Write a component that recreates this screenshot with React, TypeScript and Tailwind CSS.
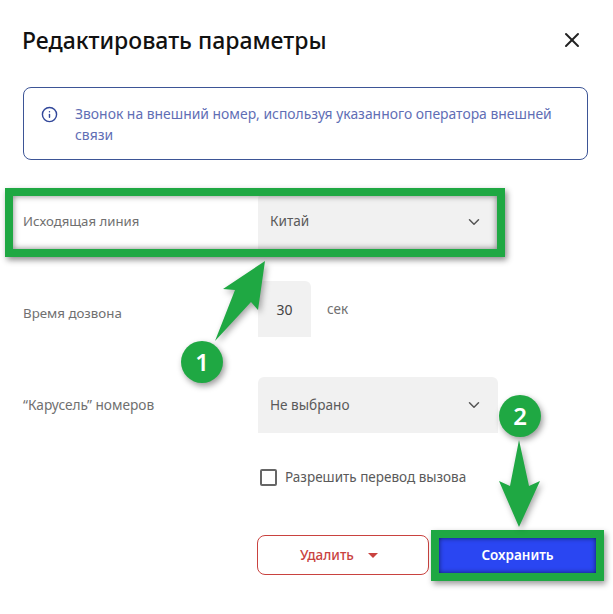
import React from 'react';
import { ChevronDown, Info, X } from 'lucide-react';

const font = { fontFamily: '"Noto Sans", sans-serif' };

function Select({ value }: { value: string }) {
    return (
        <div className="flex h-full items-center justify-between rounded-t-md bg-[#f1f1f1] pl-3 pr-[15px] text-[13.6px] text-[#5a5a5a]">
            <span>{value}</span>
            <ChevronDown className="h-[18px] w-[18px] text-[#555]" strokeWidth={2} />
        </div>
    );
}

function Badge({ n, className }: { n: number; className: string }) {
    return (
        <div className={`absolute z-20 flex h-[42px] w-[42px] items-center justify-center rounded-full bg-[#1fa843] text-[24px] font-semibold text-white shadow-[2px_3px_6px_rgba(0,0,0,0.4)] ${className}`}>
            {n}
        </div>
    );
}

export default function App() {
    return (
        <div className="relative h-[614px] w-[613px] overflow-hidden bg-white pl-[23px] pr-[25px] pt-6" style={font}>
            <div className="flex h-8 items-center justify-between">
                <h1 className="-ml-px text-[23px] font-medium leading-8 text-[#111]">Редактировать параметры</h1>
                <X className="mr-1 h-6 w-6 text-[#222]" strokeWidth={2} />
            </div>

            <div className="mt-[31px] flex h-[73px] gap-[17px] rounded-lg border border-[#3d5596] py-[15px] pl-[17px] pr-6">
                <Info className="mt-[3px] h-[17px] w-[17px] shrink-0 text-[#31479a]" strokeWidth={2} />
                <p className="text-[13.9px] leading-[21px] text-[#5f6eb5]">
                    Звонок на внешний номер, используя указанного оператора внешней связи
                </p>
            </div>

            <div className="relative mt-[33px] grid h-[57px] w-[475px] grid-cols-[235px_240px] items-center">
                <span className="text-[13.2px] text-[#707070]">Исходящая линия</span>
                <Select value="Китай" />
                <div className="absolute -bottom-[7px] -left-[18px] -right-[7px] -top-[5px] border-8 border-[#1fa843] shadow-[2px_3px_6px_rgba(0,0,0,0.45),inset_0_0_6px_rgba(0,0,0,0.5)]" />
            </div>

            <div className="mt-[31px] grid h-[56px] w-[475px] grid-cols-[235px_240px]">
                <span className="self-center pt-[9px] text-[13.3px] text-[#707070]">Время дозвона</span>
                <div className="flex h-full items-center gap-4">
                    <div className="flex h-full w-[53px] items-center justify-center rounded-t-md bg-[#f1f1f1] text-[14px] text-[#444]">30</div>
                    <span className="text-[13.5px] text-[#707070]">сек</span>
                </div>
            </div>

            <div className="mt-[40px] grid h-[56px] w-[475px] grid-cols-[235px_240px] items-center">
                <span className="text-[13.7px] text-[#707070]">“Карусель” номеров</span>
                <Select value="Не выбрано" />
            </div>

            <div className="ml-[237px] mt-[36px] flex h-4 items-center gap-2">
                <div className="h-[17px] w-[17px] rounded-[2px] border-2 border-[#666]" />
                <span className="text-[13.5px] text-[#5a5a5a]">Разрешить перевод вызова</span>
            </div>

            <div className="ml-[234px] mt-[50px] flex items-center gap-[10px]">
                <button className="flex h-10 w-[172px] shrink-0 items-center justify-center gap-[14px] rounded-lg border border-[#c9423f] pr-[8px] text-[13.5px] font-medium text-[#c9423f]">
                    Удалить
                    <span className="h-0 w-0 border-x-[5px] border-t-[5px] border-x-transparent border-t-[#c9423f]" />
                </button>
                <div className="relative shrink-0">
                    <button className="flex h-[35px] w-[157px] items-center justify-center bg-[#2a46f2] text-[13.5px] font-semibold text-white shadow-[inset_0_0_5px_rgba(0,0,0,0.6)]">
                        Сохранить
                    </button>
                    <div className="absolute -inset-2 border-8 border-[#1fa843] shadow-[2px_3px_6px_rgba(0,0,0,0.4)]" />
                </div>
            </div>

            {/* annotation arrows */}
            <svg className="absolute left-0 top-0 z-10 drop-shadow-[2px_3px_3px_rgba(0,0,0,0.35)]" width="613" height="614" viewBox="0 0 613 614">
                <polygon points="265,261 223,289 235,290 215,341 251,302 258,310" fill="#1fa843" />
                <polygon points="519,440 529,486 540,481 519,527 499,481 510,486" fill="#1fa843" />
            </svg>
            <Badge n={1} className="left-[181px] top-[341px]" />
            <Badge n={2} className="left-[499px] top-[395px]" />
        </div>
    );
}
